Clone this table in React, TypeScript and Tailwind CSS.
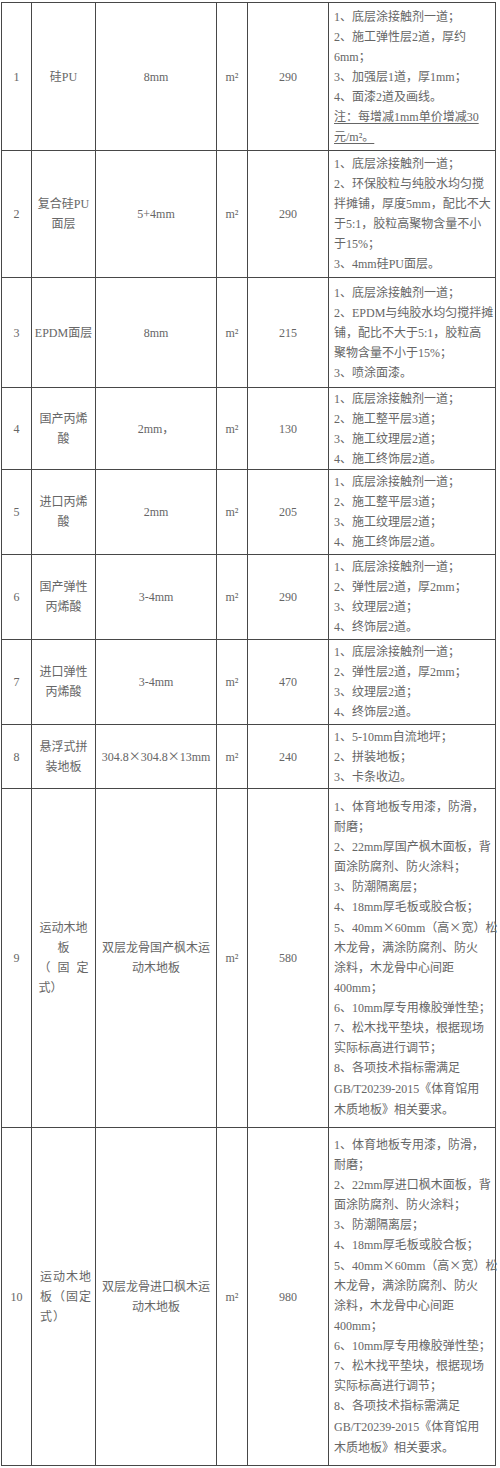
import React from 'react';

type Row = {
  no: string;
  name: React.ReactNode;
  spec: React.ReactNode;
  price: string;
  steps: React.ReactNode[];
  h: string;
};

// × and 《》 are full-width in the source font, so draw them with the CJK face
const wide = (s: string) =>
  s.split(/([×《》])/).map((p, i) =>
    /[×《》]/.test(p) ? (
      <span key={i} className="font-['Noto_Sans_CJK_SC']">
        {p}
      </span>
    ) : (
      p
    ),
  );

const Lines = ({ lines }: { lines: string[] }) => (
  <div className="text-center">
    {lines.map((l, i) => (
      <div key={i}>{wide(l)}</div>
    ))}
  </div>
);

const woodSteps = (origin: string) => [
  '1、体育地板专用漆，防滑，',
  '耐磨；',
  `2、22mm厚${origin}枫木面板，背`,
  '面涂防腐剂、防火涂料；',
  '3、防潮隔离层；',
  '4、18mm厚毛板或胶合板；',
  '5、40mm×60mm（高×宽）松',
  '木龙骨，满涂防腐剂、防火',
  '涂料，木龙骨中心间距',
  '400mm；',
  '6、10mm厚专用橡胶弹性垫；',
  '7、松木找平垫块，根据现场',
  '实际标高进行调节；',
  '8、各项技术指标需满足',
  'GB/T20239-2015《体育馆用',
  '木质地板》相关要求。',
];

const rows: Row[] = [
  {
    no: '1',
    name: <Lines lines={['硅PU']} />,
    spec: <Lines lines={['8mm']} />,
    price: '290',
    h: 'h-[148px]',
    steps: [
      '1、底层涂接触剂一道；',
      '2、施工弹性层2道，厚约',
      '6mm；',
      '3、加强层1道，厚1mm；',
      '4、面漆2道及画线。',
      <span className="underline underline-offset-2">注：每增减1mm单价增减30</span>,
      <span className="underline underline-offset-2">元/m²。</span>,
    ],
  },
  {
    no: '2',
    name: <Lines lines={['复合硅PU', '面层']} />,
    spec: <Lines lines={['5+4mm']} />,
    price: '290',
    h: 'h-[127px]',
    steps: [
      '1、底层涂接触剂一道；',
      '2、环保胶粒与纯胶水均匀搅',
      '拌摊铺，厚度5mm，配比不大',
      '于5:1，胶粒高聚物含量不小',
      '于15%；',
      '3、4mm硅PU面层。',
    ],
  },
  {
    no: '3',
    name: <Lines lines={['EPDM面层']} />,
    spec: <Lines lines={['8mm']} />,
    price: '215',
    h: 'h-[110px]',
    steps: [
      '1、底层涂接触剂一道；',
      '2、EPDM与纯胶水均匀搅拌摊',
      '铺，配比不大于5:1，胶粒高',
      '聚物含量不小于15%；',
      '3、喷涂面漆。',
    ],
  },
  {
    no: '4',
    name: <Lines lines={['国产丙烯', '酸']} />,
    spec: <Lines lines={['2mm，']} />,
    price: '130',
    h: 'h-[82px]',
    steps: ['1、底层涂接触剂一道；', '2、施工整平层3道；', '3、施工纹理层2道；', '4、施工终饰层2道。'],
  },
  {
    no: '5',
    name: <Lines lines={['进口丙烯', '酸']} />,
    spec: <Lines lines={['2mm']} />,
    price: '205',
    h: 'h-[85px]',
    steps: ['1、底层涂接触剂一道；', '2、施工整平层3道；', '3、施工纹理层2道；', '4、施工终饰层2道。'],
  },
  {
    no: '6',
    name: <Lines lines={['国产弹性', '丙烯酸']} />,
    spec: <Lines lines={['3-4mm']} />,
    price: '290',
    h: 'h-[85px]',
    steps: ['1、底层涂接触剂一道；', '2、弹性层2道，厚2mm；', '3、纹理层2道；', '4、终饰层2道。'],
  },
  {
    no: '7',
    name: <Lines lines={['进口弹性', '丙烯酸']} />,
    spec: <Lines lines={['3-4mm']} />,
    price: '470',
    h: 'h-[85px]',
    steps: ['1、底层涂接触剂一道；', '2、弹性层2道，厚2mm；', '3、纹理层2道；', '4、终饰层2道。'],
  },
  {
    no: '8',
    name: <Lines lines={['悬浮式拼', '装地板']} />,
    spec: <Lines lines={['304.8×304.8×13mm']} />,
    price: '240',
    h: 'h-[64px]',
    steps: ['1、5-10mm自流地坪；', '2、拼装地板；', '3、卡条收边。'],
  },
  {
    no: '9',
    name: (
      <div className="mx-auto w-[50px]">
        <div className="text-center">运动木地</div>
        <div className="text-center">板</div>
        <div className="flex justify-between">
          <span>（</span>
          <span>固</span>
          <span>定</span>
        </div>
        <div className="text-left">式）</div>
      </div>
    ),
    spec: <Lines lines={['双层龙骨国产枫木运', '动木地板']} />,
    price: '580',
    h: 'h-[339px]',
    steps: woodSteps('国产'),
  },
  {
    no: '10',
    name: (
      <div className="ml-[5px] text-left tracking-[1px]">
        <div>运动木地</div>
        <div>板（固定</div>
        <div>式）</div>
      </div>
    ),
    spec: <Lines lines={['双层龙骨进口枫木运', '动木地板']} />,
    price: '980',
    h: 'h-[338px]',
    steps: woodSteps('进口'),
  },
];

const cell = 'flex items-center border-r border-b border-[#484848]';

export default function App() {
  return (
    <div className="min-h-[1468px] w-[500px] bg-white pt-[2px] pl-[1px]">
      <div
        className="w-[495px] border-t border-l border-[#484848] text-[12px] leading-[20px] text-[#666]"
        style={{ fontFamily: '"Liberation Serif", "Noto Sans CJK SC", serif' }}
      >
        {rows.map((r) => (
          <div key={r.no} className={`flex ${r.h}`}>
            <div className={`${cell} w-[30px] justify-center`}>{r.no}</div>
            <div className={`${cell} w-[64px] justify-center`}>{r.name}</div>
            <div className={`${cell} w-[121px] justify-center`}>{r.spec}</div>
            <div className={`${cell} w-[31px] justify-center`}>m²</div>
            <div className={`${cell} w-[81px] justify-center`}>{r.price}</div>
            <div className={`${cell} w-[167px] pl-[5px]`}>
              <div className="whitespace-nowrap">
                {r.steps.map((s, i) => (
                  <div key={i}>{typeof s === 'string' ? wide(s) : s}</div>
                ))}
              </div>
            </div>
          </div>
        ))}
      </div>
    </div>
  );
}
